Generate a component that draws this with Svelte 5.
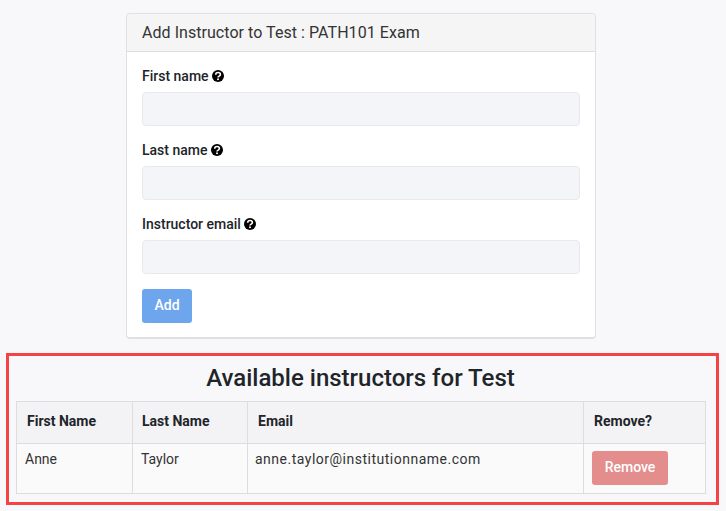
<script>
  const fields = [
    { id: "first", label: "First name" },
    { id: "last", label: "Last name" },
    { id: "email", label: "Instructor email" }
  ];

  const instructors = [
    { first: "Anne", last: "Taylor", email: "anne.taylor@institutionname.com" }
  ];
</script>

<div class="page">
  <div class="card">
    <div class="card-header">Add Instructor to Test : PATH101 Exam</div>
    <div class="card-body">
      {#each fields as field}
        <div class="form-group">
          <label for={field.id}>
            {field.label}
            <svg class="help" viewBox="0 0 12 12" aria-hidden="true">
              <circle cx="6" cy="6" r="6" fill="#000" />
              <path d="M3.7 4.700C3.700 3.300 4.800 2.500 6.100 2.500c1.300 0 2.300.8 2.300 1.900 0 1.700-2.400 1.600-2.400 3.200" fill="none" stroke="#fff" stroke-width="1.600" />
              <rect x="5.100" y="8.500" width="1.800" height="1.600" fill="#fff" />
            </svg>
          </label>
          <input id={field.id} type="text" />
        </div>
      {/each}
      <button class="btn-add" type="button">Add</button>
    </div>
  </div>

  <div class="highlight">
    <h2>Available instructors for Test</h2>
    <table>
      <colgroup>
        <col class="col-first" />
        <col class="col-last" />
        <col class="col-email" />
        <col class="col-remove" />
      </colgroup>
      <thead>
        <tr>
          <th>First Name</th>
          <th class="th-last">Last Name</th>
          <th>Email</th>
          <th>Remove?</th>
        </tr>
      </thead>
      <tbody>
        {#each instructors as row}
          <tr>
            <td>{row.first}</td>
            <td>{row.last}</td>
            <td class="email">{row.email}</td>
            <td><button class="btn-remove" type="button">Remove</button></td>
          </tr>
        {/each}
      </tbody>
    </table>
  </div>
</div>

<style>
  :global(body) {
    margin: 0;
    background: #f8f8fb;
    font-family: Roboto, "Liberation Sans", sans-serif;
    color: #212529;
  }

  .page {
    width: 726px;
    height: 511px;
    padding-top: 13px;
    box-sizing: border-box;
    overflow: hidden;
  }

  .card {
    width: 470px;
    height: 326px;
    margin-left: 126px;
    box-sizing: border-box;
    background: #fff;
    border: 1px solid #e0e0e3;
    border-bottom-width: 2px;
    border-radius: 4px;
  }

  .card-header {
    height: 38px;
    box-sizing: border-box;
    padding: 0 15px;
    display: flex;
    align-items: center;
    background: #f5f5f5;
    border-bottom: 1px solid #ddd;
    border-radius: 3px 3px 0 0;
    font-size: 16px;
    letter-spacing: 0.05px;
    color: #333;
  }

  .card-body {
    padding: 14px 15px 0;
  }

  .form-group {
    margin-bottom: 14px;
  }

  label {
    display: flex;
    align-items: center;
    gap: 3px;
    height: 20px;
    margin-bottom: 6px;
    font-size: 14px;
    font-weight: 500;
    color: #212529;
  }

  .help {
    width: 12px;
    height: 12px;
  }

  input {
    display: block;
    width: 100%;
    height: 34px;
    box-sizing: border-box;
    background: #f4f5f8;
    border: 1px solid #e8e9ec;
    border-radius: 4px;
  }

  button {
    display: block;
    font-family: inherit;
    font-weight: 500;
    font-size: 14px;
    color: #fff;
    border: 0;
    border-radius: 3px;
    padding: 0 0 2px;
  }

  .btn-add {
    width: 50px;
    height: 34px;
    margin-top: 15px;
    background: #6ea6ed;
  }

  .highlight {
    width: 713px;
    height: 152px;
    margin: 14px 0 0 6px;
    box-sizing: border-box;
    padding: 0 7px;
    border: 3px solid #f44245;
  }

  h2 {
    margin: 0;
    height: 45px;
    box-sizing: border-box;
    padding: 0 4px 2px 0;
    display: flex;
    align-items: center;
    justify-content: center;
    font-size: 24px;
    font-weight: 500;
    color: #212529;
  }

  table {
    width: 689px;
    table-layout: fixed;
    border-collapse: collapse;
    font-size: 14px;
  }

  .col-first { width: 116px; }
  .col-last { width: 115px; }
  .col-email { width: 336px; }
  .col-remove { width: 122px; }

  th,
  td {
    border: 1px solid #ddd;
  }

  th {
    height: 42px;
    box-sizing: border-box;
    padding: 0 10px 4px;
    text-align: left;
    font-weight: 700;
    background: #f3f2f4;
    color: #212529;
  }

  th.th-last {
    padding-left: 9px;
  }

  td {
    padding: 0 8px;
    vertical-align: top;
    background: #fafafb;
    color: #333;
  }

  td:not(:last-child) {
    padding-top: 7px;
    line-height: 17px;
    height: 42px;
  }

  td:last-child {
    padding-top: 7px;
    height: 42px;
  }

  .email {
    letter-spacing: 0.5px;
  }

  td.email {
    padding-left: 7px;
  }

  .btn-remove {
    width: 76px;
    height: 34px;
    background: #e38d8d;
  }
</style>
